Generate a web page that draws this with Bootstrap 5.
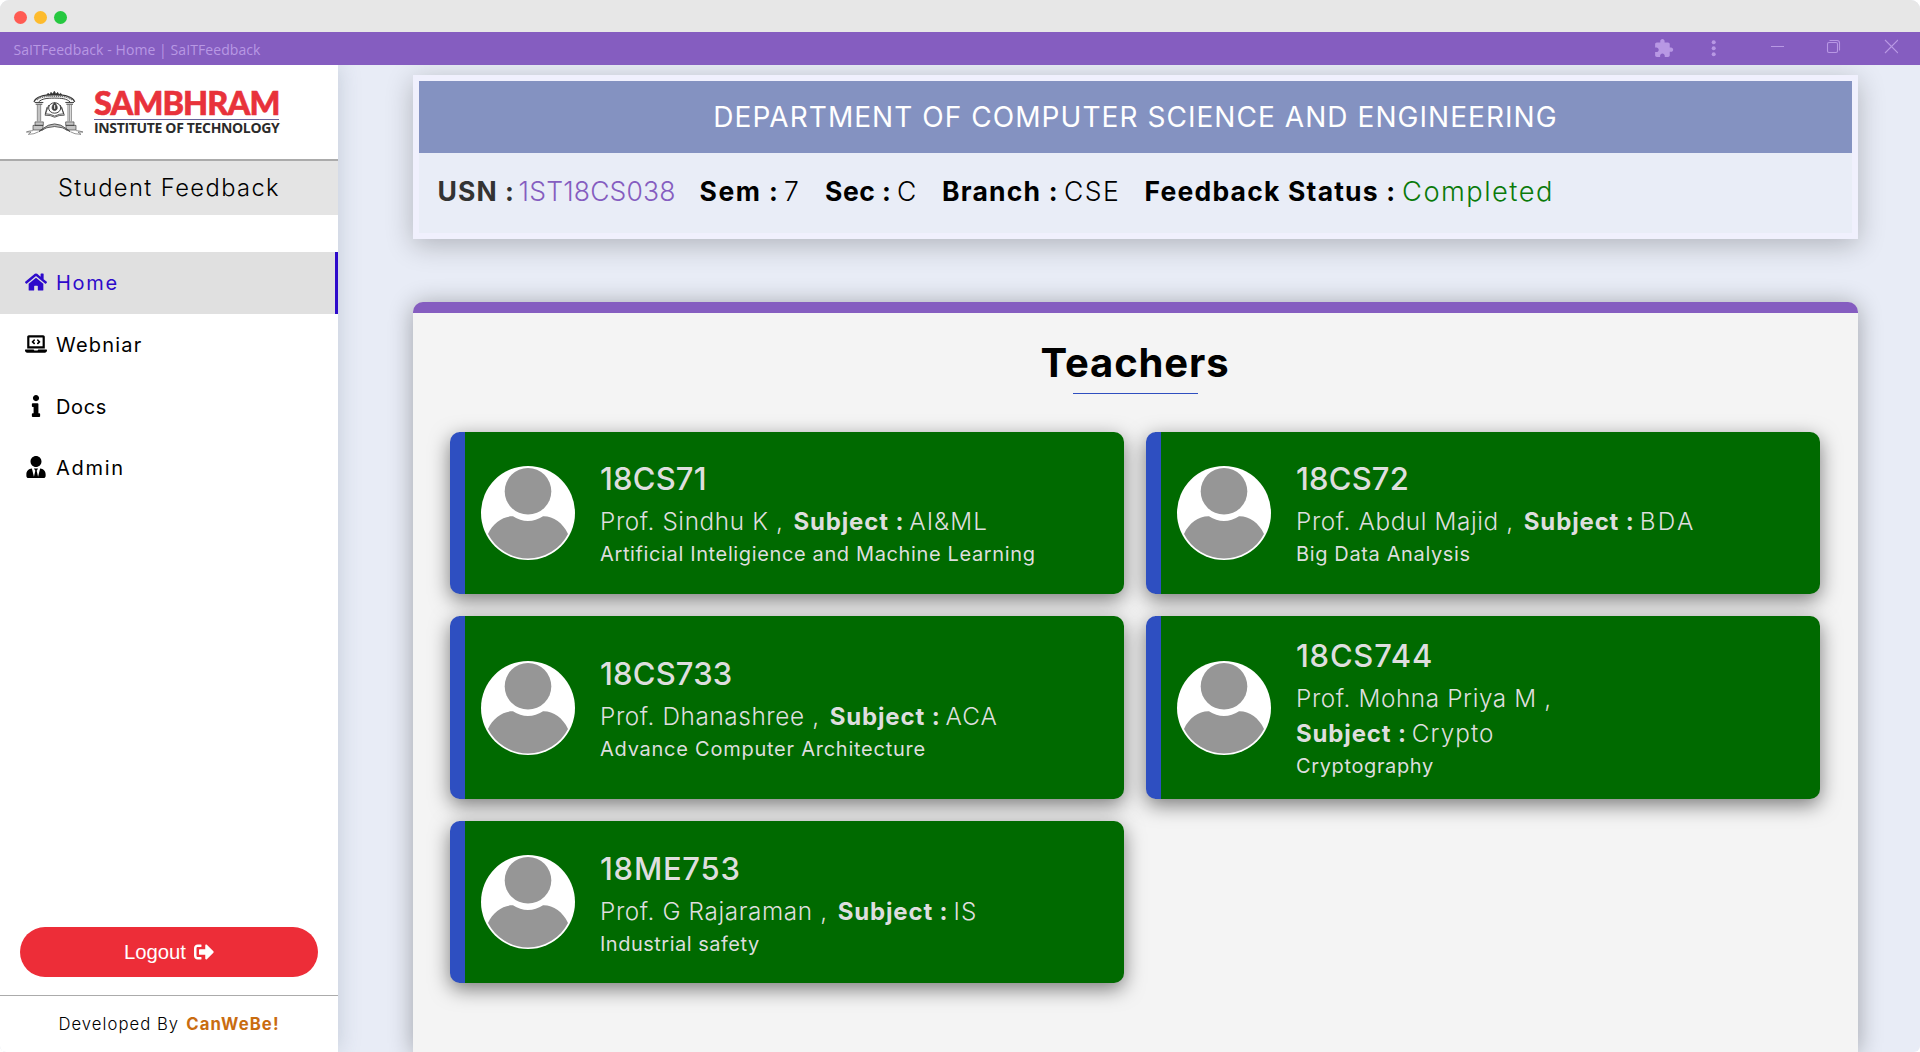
<!DOCTYPE html>
<html lang="en">
<head>
<meta charset="utf-8">
<meta name="viewport" content="width=device-width, initial-scale=1">
<title>SaITFeedback - Home | SaITFeedback</title>
<link href="https://cdn.jsdelivr.net/npm/bootstrap@5.3.0/dist/css/bootstrap.min.css" rel="stylesheet">
<style>
  body { background: #fff; color: #000; font-family: Inter, "Open Sans", sans-serif; overflow: hidden; }
  .window { height: 1052px; border-radius: 9px 9px 6px 6px; overflow: hidden; background: #e8ecf6; }
  .lights { height: 32px; background: #e7e7e7; padding-left: 13.5px; gap: 7px; padding-top: 2px; }
  .light { width: 13px; height: 13px; border-radius: 50%; }
  .light-red { background: #ff5b53; }
  .light-amber { background: #fdbb2d; }
  .light-green { background: #26c840; }
  .titlebar { height: 33px; background: #855dc0; color: #b898e4; font: 14px "Open Sans", sans-serif; letter-spacing: .08px; padding-left: 13.5px; padding-right: 22px; position: relative; z-index: 3; }
  .titlebar-text { padding-top: 1px; }

  .sidebar { width: 338px; background: #fff; box-shadow: 0 0 22px rgba(60, 80, 110, .22); position: relative; z-index: 2; }
  .logo { height: 96px; border-bottom: 2px solid #ababab; padding: 18px 0 0 20px; }
  .logo-name { font: 900 32.5px/30px Lato, sans-serif; letter-spacing: -.9px; color: #e8323b; padding-top: 5px; height: 36px; -webkit-text-stroke: .6px #e8323b; }
  .logo-sub { font: 700 14px/16px "Open Sans", sans-serif; letter-spacing: -.34px; color: #2b2b2b; border-top: 1px solid #66649a; }
  .logo-words { width: 185px; margin-left: 4px; white-space: nowrap; }
  .side-title { height: 54px; background: #e4e4e4; font-size: 23.7px; font-weight: 300; letter-spacing: 1.4px; margin-bottom: 37px; }
  .side-nav a { height: 61.7px; padding-left: 25px; padding-top: 1px; gap: 9px; font-size: 20px; color: #000; text-decoration: none; border-right: 3px solid transparent; }
  .side-nav a.active { background: #e0e0e0; color: #2e0bcb; border-color: #2e0bcb; }
  .side-nav svg { width: 22px; height: 22px; margin-top: -2px; fill: currentColor; }
  .btn-logout { height: 50px; margin: 0 20px 18px; border-radius: 25px; background: #ed2d38; color: #fff; font: 20.3px "Liberation Sans", sans-serif; gap: 8px; }
  .credit { height: 57px; border-top: 1px solid #ababab; font-size: 16.7px; font-weight: 300; gap: 7px; padding-top: 1px; }
  .credit b { color: #c96c10; font-weight: 700; letter-spacing: 1.1px; }

  .content { padding: 10px 62px 0 75px; }
  .student { height: 164px; border: 6px solid #f0f0fd; background: #e9edf7; box-shadow: 0 6px 26px rgba(0, 0, 0, .24); }
  .dept { height: 72px; background: #8492c1; color: #fff; font-size: 28px; letter-spacing: 1.05px; }
  .info { display: grid; grid-template-columns: 81px 181px 84.5px 41px 72px 45px 122px 80.5px 257.5px 160px; padding: 18px 0 0 18.6px; font-size: 26.5px; line-height: 40px; font-weight: 300; white-space: nowrap; }
  .info b { font-weight: 700; }
  .usn-label { color: #333; }
  .usn { color: #855dc0; }
  .status { color: #0a7a0a; font-size: 27.3px; line-height: 41px; }

  .panel { margin-top: 63px; border-top: 11px solid #855dc0; border-radius: 10px 10px 0 0; background: #f4f4f4; box-shadow: 0 2px 24px rgba(0, 0, 0, .32); padding: 25px 38px 0 37px; }
  .panel h1 { font-size: 40px; line-height: 50px; font-weight: 700; letter-spacing: .85px; }
  .rule { width: 125px; height: 1px; background: #2f4fc0; margin: 5px auto 38px; }
  .courses { --bs-gutter-x: 22px; --bs-gutter-y: 22px; }
  .course { height: 162px; border-left: 15px solid #2e4fc1; border-radius: 10px; background: #006a00; color: #dedede; padding-left: 16px; gap: 25px; box-shadow: 0 6px 20px rgba(0, 0, 0, .5); white-space: nowrap; }
  .course-tall { height: 183px; }
  .course-low .details { padding-top: 2px; }
  .avatar { width: 94px; height: 94px; flex: none; }
  .course h2 { font-size: 31px; line-height: 41px; font-weight: 500; margin: 0 0 5px; }
  .prof { font-size: 24.3px; line-height: 35px; font-weight: 300; letter-spacing: .62px; column-gap: 10px; }
  .prof b { font-weight: 700; font-size: 24px; letter-spacing: .85px; margin-right: 5px; }
  .topic { font-size: 20px; line-height: 29px; padding-top: 1px; }

  .ls-02 { letter-spacing: .18px; }
  .ls-05 { letter-spacing: .5px; }
  .ls-06 { letter-spacing: .63px; }
  .ls-08 { letter-spacing: .75px; }
  .ls-10 { letter-spacing: 1.04px; }
  .ls-12 { letter-spacing: 1.2px; }
  .ls-14 { letter-spacing: 1.45px; }
  .ls-17 { letter-spacing: 1.73px; }
  .ls-24 { letter-spacing: 2.4px; }
</style>
<script src="https://cdn.jsdelivr.net/npm/bootstrap@5.3.0/dist/js/bootstrap.bundle.min.js"></script>
</head>
<body>
<svg class="d-none" aria-hidden="true">
  <symbol id="person" viewBox="0 0 94 94">
    <circle cx="47" cy="47" r="47" fill="#fff"/>
    <circle cx="47" cy="25.300" r="23.300" fill="#969696"/>
    <path fill="#969696" d="M7 68C12 57 22 50 32 50.300Q39 55 47 55T62 50.300C72 50 82 57 87 68A45 45 0 0 1 7 68Z"/>
  </symbol>
</svg>

<div class="window d-flex flex-column">
  <div class="lights d-flex align-items-center flex-shrink-0">
    <span class="light light-red"></span><span class="light light-amber"></span><span class="light light-green"></span>
  </div>
  <header class="titlebar d-flex align-items-center justify-content-between flex-shrink-0">
    <span class="titlebar-text">SaITFeedback - Home | SaITFeedback</span>
    <svg width="246" height="33" viewBox="1652 32 246 33" fill="none" stroke="#b898e4" stroke-width="1.100">
      <path transform="translate(1653.400 38.100) scale(.86)" fill="#b898e4" stroke="none" d="M20.500 11H19V7c0-1.100-.9-2-2-2h-4V3.500C13 2.120 11.880 1 10.500 1S8 2.120 8 3.500V5H4c-1.100 0-1.990.9-1.990 2v3.800H3.500c1.490 0 2.700 1.210 2.700 2.700s-1.210 2.700-2.700 2.700H2V20c0 1.100.9 2 2 2h3.800v-1.500c0-1.490 1.210-2.700 2.700-2.700 1.490 0 2.700 1.210 2.700 2.700V22H17c1.100 0 2-.9 2-2v-4h1.500c1.380 0 2.500-1.120 2.500-2.500S21.880 11 20.500 11z"/>
      <g fill="#b898e4" stroke="none"><circle cx="1713.700" cy="42.300" r="2"/><circle cx="1713.700" cy="48.300" r="2"/><circle cx="1713.700" cy="54.300" r="2"/></g>
      <path d="M1771 46.500h13M1885 40l13 13M1898 40l-13 13"/>
      <rect x="1827.500" y="42.500" width="10" height="10" rx="1.500"/>
      <path d="M1829.500 40.500h7.500a2.500 2.500 0 0 1 2.500 2.500v7.500"/>
    </svg>
  </header>

  <div class="d-flex flex-grow-1">
    <aside class="sidebar d-flex flex-column flex-shrink-0">
      <div class="logo d-flex">
        <svg width="70" height="60" viewBox="0 0 210 180" fill="none" stroke="#333" stroke-width="3">
          <g transform="translate(0 14) scale(1 .87)">
            <path d="M42 49C48 32 70 24 103 24s55 8 61 25" stroke-width="4"/>
            <path d="M56 49C66 38 80 36 103 36s37 2 47 13"/>
            <path d="M50 42C62 30 80 29 103 29s41 1 53 13" stroke="#777" stroke-width="6" stroke-dasharray="4 2"/>
            <path d="M80 26l4-7 5 5 4-8 5 6 5-10 5 10 5-6 4 8 5-5 4 7" fill="#333" stroke-width="2"/>
            <path d="M44 51h26M136 51h26M47 57h20M139 57h20"/>
            <path d="M52 58v58M57 58v58M62 58v58M144 58v58M149 58v58M154 58v58" stroke="#666" stroke-width="2.500"/>
            <path d="M45 118h25v12H45zM137 118h25v12h-25zM39 130h30v16H39zM138 130h30v16h-30z" fill="#c4c4c4" stroke-width="2"/>
            <path d="M66 143q38-36 75 0l9 8q-46-34-93 0z" fill="#bbb" stroke-width="2.500"/>
            <path d="M39 148q-13 1-20 5h14l-8 8q18 0 31-9M168 148q12 1 21 5h-15l9 8q-20 0-32-9" stroke="#555" stroke-width="2"/>
            <path d="M86 60l-11 35q17-1 29 7 12-8 29-7l-12-35M81 67l-5 23q15 0 28 8 14-8 27-8l-6-23" stroke-width="2.500"/>
            <circle cx="104" cy="70" r="18"/>
            <path d="M104 51q-12 16-6 25 6 6 12 0 6-9-6-25z" fill="#444" stroke-width="2"/>
            <path d="M104 60v13" stroke="#fff"/>
          </g>
        </svg>
        <div class="logo-words">
          <div class="logo-name">SAMBHRAM</div>
          <div class="logo-sub">INSTITUTE OF TECHNOLOGY</div>
        </div>
      </div>
      <div class="side-title d-flex align-items-center justify-content-center">Student Feedback</div>
      <nav class="side-nav d-flex flex-column">
        <a class="active d-flex align-items-center ls-17" href="#"><svg viewBox="0 0 576 512"><path d="M280.370 148.260L96 300.110V464a16 16 0 0 0 16 16l112.060-.29a16 16 0 0 0 15.920-16V368a16 16 0 0 1 16-16h64a16 16 0 0 1 16 16v95.640a16 16 0 0 0 16 16.050L464 480a16 16 0 0 0 16-16V300L295.670 148.260a12.190 12.190 0 0 0-15.300 0zM571.600 251.470L488 182.560V44.050a12 12 0 0 0-12-12h-56a12 12 0 0 0-12 12v72.610L318.470 43a48 48 0 0 0-61 0L4.340 251.470a12 12 0 0 0-1.600 16.900l25.500 31A12 12 0 0 0 45.150 301l235.220-193.740a12.190 12.190 0 0 1 15.300 0L530.900 301a12 12 0 0 0 16.900-1.600l25.500-31a12 12 0 0 0-1.700-16.930z"/></svg>Home</a>
        <a class="d-flex align-items-center ls-12" href="#"><svg viewBox="0 0 640 512"><path d="M255.030 261.650c6.250 6.250 16.380 6.250 22.630 0l11.310-11.310c6.250-6.250 6.250-16.380 0-22.630L253.250 192l35.710-35.720c6.250-6.250 6.250-16.380 0-22.630l-11.310-11.310c-6.250-6.250-16.380-6.250-22.630 0l-58.340 58.340c-6.250 6.250-6.250 16.380 0 22.630l58.350 58.340zm96.010-11.300l11.310 11.310c6.250 6.250 16.380 6.250 22.630 0l58.340-58.340c6.250-6.250 6.250-16.380 0-22.630l-58.340-58.340c-6.250-6.250-16.380-6.250-22.630 0l-11.310 11.310c-6.250 6.250-6.250 16.380 0 22.630L386.750 192l-35.710 35.720c-6.250 6.250-6.250 16.380 0 22.630zM624 416H381.540c-.74 19.810-14.710 32-32.740 32H288c-18.690 0-33.020-17.470-32.770-32H16c-8.800 0-16 7.200-16 16v16c0 35.200 28.800 64 64 64h512c35.200 0 64-28.800 64-64v-16c0-8.800-7.200-16-16-16zM576 48c0-26.400-21.600-48-48-48H112C85.600 0 64 21.600 64 48v336h512V48zm-64 272H128V64h384v256z"/></svg>Webniar</a>
        <a class="d-flex align-items-center ls-06" href="#"><svg viewBox="0 0 192 512"><path d="M20 424.229h20V279.771H20c-11.046 0-20-8.954-20-20V212c0-11.046 8.954-20 20-20h112c11.046 0 20 8.954 20 20v212.229h20c11.046 0 20 8.954 20 20V492c0 11.046-8.954 20-20 20H20c-11.046 0-20-8.954-20-20v-47.771c0-11.046 8.954-20 20-20zM96 0C56.235 0 24 32.235 24 72s32.235 72 72 72 72-32.235 72-72S135.764 0 96 0z"/></svg>Docs</a>
        <a class="d-flex align-items-center ls-17" href="#"><svg viewBox="0 0 448 512"><path d="M224 256c70.700 0 128-57.300 128-128S294.700 0 224 0 96 57.300 96 128s57.300 128 128 128zm95.800 32.600L272 480l-32-136 32-56h-96l32 56-32 136-47.800-191.400C56.900 292 0 350.300 0 422.400V464c0 26.500 21.500 48 48 48h352c26.500 0 48-21.500 48-48v-41.600c0-72.100-56.900-130.400-128.200-133.800z"/></svg>Admin</a>
      </nav>
      <button class="btn-logout btn p-0 border-0 mt-auto d-flex align-items-center justify-content-center">Logout
        <svg width="20" height="20" viewBox="0 0 512 512" fill="#fff"><path d="M497 273L329 441c-15 15-41 4.500-41-17v-96H152c-13.300 0-24-10.700-24-24v-96c0-13.300 10.700-24 24-24h136V88c0-21.400 25.900-32 41-17l168 168c9.300 9.400 9.300 24.600 0 34zM192 436v-40c0-6.600-5.400-12-12-12H96c-17.700 0-32-14.300-32-32V160c0-17.700 14.300-32 32-32h84c6.600 0 12-5.400 12-12V76c0-6.600-5.400-12-12-12H96c-53 0-96 43-96 96v192c0 53 43 96 96 96h84c6.600 0 12-5.400 12-12z"/></svg>
      </button>
      <div class="credit d-flex align-items-center justify-content-center"><span class="ls-10">Developed By</span><b>CanWeBe!</b></div>
    </aside>

    <main class="content d-flex flex-column flex-grow-1">
      <section class="student flex-shrink-0">
        <div class="dept d-flex align-items-center justify-content-center">DEPARTMENT OF COMPUTER SCIENCE AND ENGINEERING</div>
        <div class="info">
          <b class="usn-label ls-10">USN :</b><span class="usn ls-02">1ST18CS038</span>
          <b class="ls-14">Sem :</b><span>7</span>
          <b class="ls-05">Sec :</b><span>C</span>
          <b class="ls-12">Branch :</b><span class="ls-14">CSE</span>
          <b class="ls-12">Feedback Status :</b><span class="status ls-14">Completed</span>
        </div>
      </section>

      <section class="panel flex-grow-1">
        <h1 class="text-center m-0">Teachers</h1>
        <div class="rule"></div>
        <div class="courses row row-cols-2">
          <div class="col"><article class="course d-flex align-items-center">
            <svg class="avatar"><use href="#person"/></svg>
            <div class="details"><h2 class="ls-02">18CS71</h2>
              <div class="prof d-flex"><span>Prof. Sindhu K ,</span><span><b>Subject :</b><span class="ls-10">AI&amp;ML</span></span></div>
              <div class="topic ls-06">Artificial Inteligience and Machine Learning</div></div>
          </article></div>
          <div class="col"><article class="course d-flex align-items-center">
            <svg class="avatar"><use href="#person"/></svg>
            <div class="details"><h2 class="ls-02">18CS72</h2>
              <div class="prof d-flex"><span>Prof. Abdul Majid ,</span><span><b>Subject :</b><span class="ls-24">BDA</span></span></div>
              <div class="topic ls-06">Big Data Analysis</div></div>
          </article></div>
          <div class="col"><article class="course course-tall course-low d-flex align-items-center">
            <svg class="avatar"><use href="#person"/></svg>
            <div class="details"><h2 class="ls-02">18CS733</h2>
              <div class="prof d-flex"><span>Prof. Dhanashree ,</span><span><b>Subject :</b><span class="ls-10">ACA</span></span></div>
              <div class="topic ls-08">Advance Computer Architecture</div></div>
          </article></div>
          <div class="col"><article class="course course-tall d-flex align-items-center">
            <svg class="avatar"><use href="#person"/></svg>
            <div class="details"><h2 class="ls-08">18CS744</h2>
              <div class="prof d-flex flex-column"><span>Prof. Mohna Priya M ,</span><span><b>Subject :</b><span class="ls-10">Crypto</span></span></div>
              <div class="topic ls-06">Cryptography</div></div>
          </article></div>
          <div class="col"><article class="course course-low d-flex align-items-center">
            <svg class="avatar"><use href="#person"/></svg>
            <div class="details"><h2 class="ls-08">18ME753</h2>
              <div class="prof d-flex"><span>Prof. G Rajaraman ,</span><span><b>Subject :</b><span class="ls-10">IS</span></span></div>
              <div class="topic ls-05">Industrial safety</div></div>
          </article></div>
        </div>
      </section>
    </main>
  </div>
</div>
</body>
</html>
